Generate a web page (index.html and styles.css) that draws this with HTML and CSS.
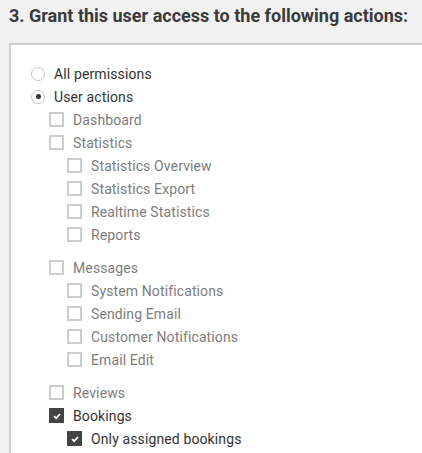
FILE: index.html
```html
<!DOCTYPE html>
<html>
<head>
<meta charset="utf-8">
<link rel="stylesheet" href="styles.css">
</head>
<body>
<h2 class="title">3. Grant this user access to the following actions:</h2>
<div class="panel">
  <div class="row"><span class="radio"></span><span class="label dark">All permissions</span></div>
  <div class="row"><span class="radio on"></span><span class="label dark">User actions</span></div>
  <div class="group l1">
    <div class="row"><span class="cb"></span><span class="label">Dashboard</span></div>
    <div class="row"><span class="cb"></span><span class="label">Statistics</span></div>
    <div class="group l2">
      <div class="row"><span class="cb"></span><span class="label">Statistics Overview</span></div>
      <div class="row"><span class="cb"></span><span class="label">Statistics Export</span></div>
      <div class="row"><span class="cb"></span><span class="label">Realtime Statistics</span></div>
      <div class="row"><span class="cb"></span><span class="label">Reports</span></div>
    </div>
    <div class="row"><span class="cb"></span><span class="label">Messages</span></div>
    <div class="group l2">
      <div class="row"><span class="cb"></span><span class="label">System Notifications</span></div>
      <div class="row"><span class="cb"></span><span class="label">Sending Email</span></div>
      <div class="row"><span class="cb"></span><span class="label">Customer Notifications</span></div>
      <div class="row"><span class="cb"></span><span class="label">Email Edit</span></div>
    </div>
    <div class="row"><span class="cb"></span><span class="label">Reviews</span></div>
    <div class="row"><span class="cb on"><svg viewBox="0 0 10 10" width="10" height="10"><path d="M2 5.2 L4.2 7.2 L8 3" fill="none" stroke="#fff" stroke-width="1.8"/></svg></span><span class="label dark">Bookings</span></div>
    <div class="group l2">
      <div class="row"><span class="cb on"><svg viewBox="0 0 10 10" width="10" height="10"><path d="M2 5.2 L4.2 7.2 L8 3" fill="none" stroke="#fff" stroke-width="1.8"/></svg></span><span class="label dark">Only assigned bookings</span></div>
    </div>
  </div>
</div>
</body>
</html>
```
FILE: styles.css
```css
html, body {
  margin: 0;
  padding: 0;
  background: #f1f1f1;
  font-family: Roboto, "Liberation Sans", sans-serif;
  overflow: hidden;
}
.title {
  margin: 0;
  padding: 4px 0 0 9px;
  font-size: 18px;
  font-weight: 700;
  color: #3a3a3a;
  line-height: 24px;
  height: 39px;
  box-sizing: border-box;
}
.panel {
  margin: 4px -20px 0 9px;
  background: #fff;
  border-top: 2px solid #cfcfcf;
  border-left: 2px solid #cfcfcf;
  padding: 17px 0 40px 20px;
}
.row {
  display: flex;
  align-items: center;
  height: 23px;
}
.label {
  font-size: 14px;
  letter-spacing: 0.12px;
  color: #7d7d7d;
}
.label.dark {
  color: #333;
}
.radio {
  width: 12px;
  height: 12px;
  border: 1.5px solid #c6c6c6;
  border-radius: 50%;
  margin-right: 9px;
  display: flex;
  align-items: center;
  justify-content: center;
  flex: none;
}
.radio.on::after {
  content: "";
  width: 5px;
  height: 5px;
  border-radius: 50%;
  background: #333;
}
.group.l1 {
  padding-left: 18px;
}
.group.l2 {
  padding-left: 18px;
}
.group.l2 + .row {
  margin-top: 10px;
}
.cb {
  width: 11px;
  height: 11px;
  border: 2px solid #cdcdcd;
  margin-right: 9px;
  flex: none;
  display: flex;
  align-items: center;
  justify-content: center;
}
.cb.on {
  background: #444;
  border-color: #444;
}
```
